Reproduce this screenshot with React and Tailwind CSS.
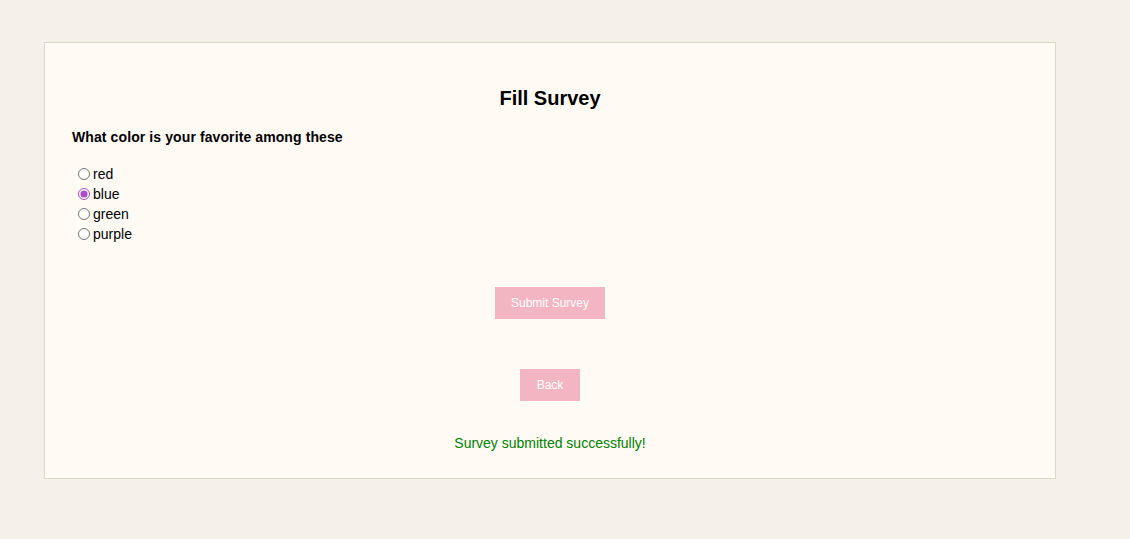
const colors = ["red", "blue", "green", "purple"]

const App = () => {
    return (
        <div className="min-h-[539px] w-full bg-[#f5f0ea] pt-[42px] font-['Liberation_Sans',Arial,sans-serif] text-black">

            <div className="ml-[44px] w-[1012px] border border-[#ddd8c6] bg-[#fffaf4] px-[27px] pt-[43px] pb-[27px]">

                <h2 className="text-center text-[20px] font-bold leading-[24px]">Fill Survey</h2>

                <p className="mt-[19px] text-[14px] font-bold leading-[16px] tracking-[0.1px]">What color is your favorite among these</p>

                <div className="mt-[19px] flex flex-col">
                    {colors.map((c) => (
                        <label key={c} className="flex h-[20px] items-center text-[14px]">
                            <input
                                type="radio"
                                name="color"
                                defaultChecked={c === "blue"}
                                className="ml-[6px] mr-[3px] h-[12px] w-[12px] accent-[#ab4ec4]"
                            />
                            {c}
                        </label>
                    ))}
                </div>

                <div className="mt-[43px] flex justify-center">
                    <button className="h-[32px] w-[110px] bg-[#f4b5c2] text-[12px] text-white">Submit Survey</button>
                </div>

                <div className="mt-[50px] flex justify-center">
                    <button className="h-[32px] w-[60px] bg-[#f4b5c2] text-[12px] text-white">Back</button>
                </div>

                <p className="mt-[34px] text-center text-[14px] leading-[16px] text-[#008000]">Survey submitted successfully!</p>

            </div>

        </div>
    )
}

export default App
